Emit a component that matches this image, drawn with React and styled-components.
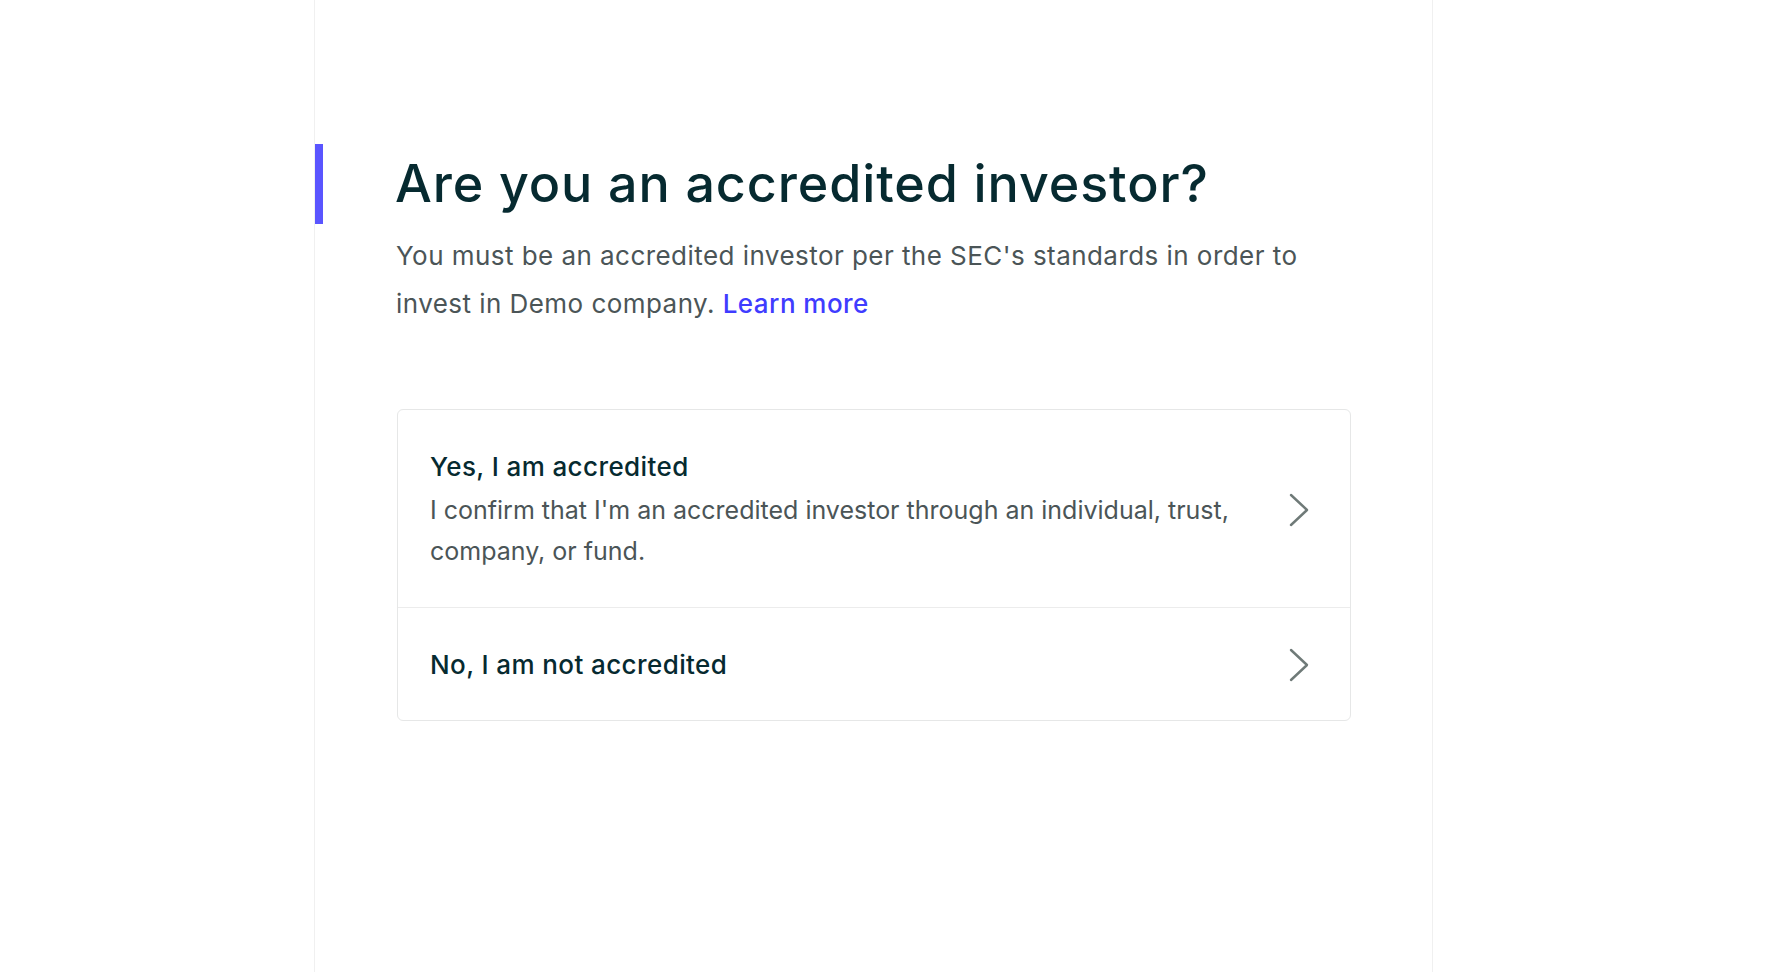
import React from 'react'
import styled, { createGlobalStyle } from 'styled-components'

const GlobalStyle = createGlobalStyle`
  html, body {
    margin: 0;
    padding: 0;
    background: #ffffff;
    font-family: Inter, "Noto Sans", sans-serif;
    -webkit-font-smoothing: antialiased;
  }
  * { box-sizing: border-box; }
`

const options = [
  {
    id: 'yes',
    title: 'Yes, I am accredited',
    text: "I confirm that I'm an accredited investor through an individual, trust, company, or fund.",
  },
  {
    id: 'no',
    title: 'No, I am not accredited',
  },
]

function Chevron() {
  return (
    <svg width="22" height="36" viewBox="0 0 22 36" fill="none">
      <path d="M3 3 L19 18 L3 33" stroke="#6f7a78" strokeWidth="2.4" strokeLinecap="round" strokeLinejoin="round" />
    </svg>
  )
}

function App() {
  return (
    <>
      <GlobalStyle />
      <Page>
        <Panel>
          <Heading>Are you an accredited investor?</Heading>
          <Lead>
            You must be an accredited investor per the SEC's standards in order to invest in Demo company.{' '}
            <LearnMore href="#">Learn more</LearnMore>
          </Lead>
          <Choices>
            {options.map((opt) => (
              <Choice key={opt.id}>
                <ChoiceBody>
                  <ChoiceTitle>{opt.title}</ChoiceTitle>
                  {opt.text && <ChoiceText>{opt.text}</ChoiceText>}
                </ChoiceBody>
                <Chevron />
              </Choice>
            ))}
          </Choices>
        </Panel>
      </Page>
    </>
  )
}

const Page = styled.div`
  min-height: 100vh;
  display: flex;
`

const Panel = styled.main`
  margin-left: 314px;
  width: 1119px;
  min-height: 100vh;
  border-left: 1px solid #f0f0f0;
  border-right: 1px solid #f0f0f0;
  padding-top: 144px;
`

const Heading = styled.h1`
  margin: 0;
  border-left: 8px solid #5a55ff;
  padding-left: 72px;
  font-size: 52px;
  line-height: 80px;
  font-weight: 500;
  letter-spacing: 0.9px;
  color: #062a30;
`

const Lead = styled.p`
  margin: 8px 0 0 81px;
  max-width: 940px;
  font-size: 26px;
  line-height: 48px;
  letter-spacing: 0.45px;
  color: #4b5557;
`

const LearnMore = styled.a`
  color: #3f3cff;
  text-decoration: none;
  font-weight: 500;
`

const Choices = styled.div`
  margin: 81px 0 0 82px;
  width: 954px;
  border: 1px solid #e6e7e7;
  border-radius: 6px;
`

const Choice = styled.div`
  display: flex;
  align-items: center;
  gap: 40px;
  padding: 37px 40px 35px 32px;
  cursor: pointer;
  & + & {
    border-top: 1px solid #ececec;
  }
`

const ChoiceBody = styled.div`
  flex: 1;
`

const ChoiceTitle = styled.div`
  font-size: 26px;
  line-height: 40px;
  font-weight: 500;
  letter-spacing: 0.4px;
  color: #062a30;
`

const ChoiceText = styled.div`
  margin-top: 3px;
  font-size: 25px;
  line-height: 41px;
  color: #4b5557;
`

export default App
